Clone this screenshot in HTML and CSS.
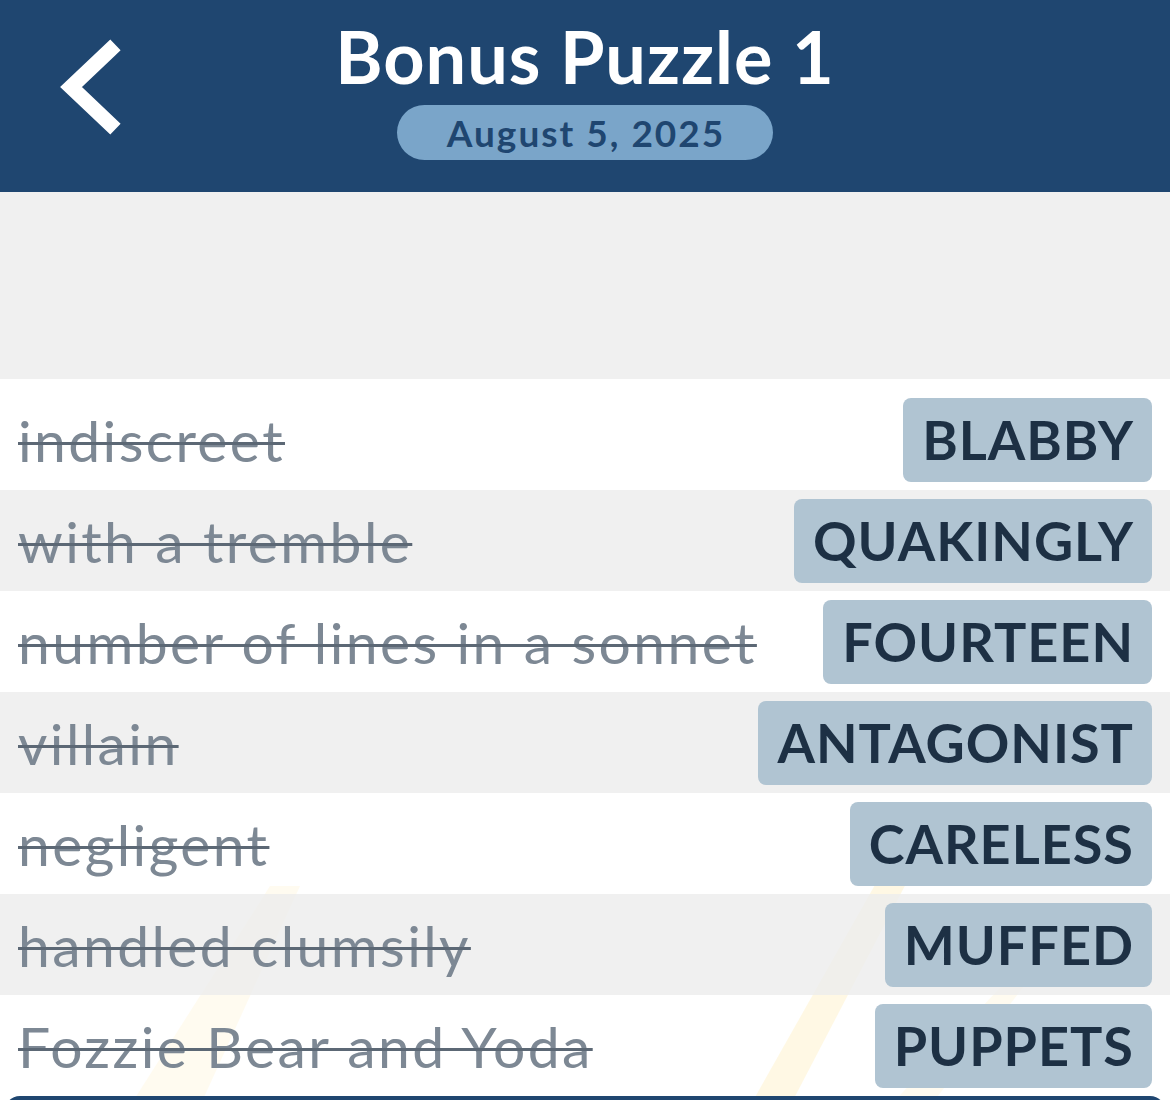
FILE: index.html
```html
<!DOCTYPE html>
<html lang="en">
<head>
    <meta charset="UTF-8">
    <meta name="viewport" content="width=device-width, initial-scale=1.0">
    <title>Bonus Puzzle 1</title>
    <link rel="stylesheet" href="styles.css">
</head>
<body>
<header class="topbar">
    <a class="back" href="#" aria-label="Back">
        <svg width="80" height="100" viewBox="0 0 80 100">
            <polyline points="60,13 21,50 60,87" fill="none" stroke="#fff" stroke-width="15" stroke-linecap="square" stroke-linejoin="miter"/>
        </svg>
    </a>
    <div class="heading">
        <h1>Bonus Puzzle 1</h1>
        <span class="date">August 5, 2025</span>
    </div>
</header>

<div class="spacer"></div>

<main class="board">
    <!-- faint sun rays behind the bottom rows -->
    <svg class="rays" width="1170" height="340" viewBox="0 0 1170 340">
        <polygon points="130,290 200,290 300,70 270,70" fill="#fff1c2" opacity="0.25"/>
        <polygon points="750,290 790,290 910,60 880,60" fill="#ffe9a6" opacity="0.3"/>
        <polygon points="890,290 930,290 1040,150 1020,150" fill="#fff1c2" opacity="0.25"/>
    </svg>
    <ul class="clues">
        <li class="clue"><span class="hint">indiscreet</span><span class="answer">BLABBY</span></li>
        <li class="clue"><span class="hint">with a tremble</span><span class="answer">QUAKINGLY</span></li>
        <li class="clue"><span class="hint">number of lines in a sonnet</span><span class="answer">FOURTEEN</span></li>
        <li class="clue"><span class="hint">villain</span><span class="answer">ANTAGONIST</span></li>
        <li class="clue"><span class="hint">negligent</span><span class="answer">CARELESS</span></li>
        <li class="clue"><span class="hint">handled clumsily</span><span class="answer">MUFFED</span></li>
        <li class="clue"><span class="hint">Fozzie Bear and Yoda</span><span class="answer">PUPPETS</span></li>
    </ul>
    <div class="bottombar"></div>
</main>
</body>
</html>
```

FILE: styles.css
```css
body {
    margin: 0;
    background-color: #f0f0f0;
    font-family: Lato, "Open Sans", sans-serif;
    overflow: hidden;
}
.topbar {
    background-color: #1f4670;
    height: 192px;
    display: grid;
    grid-template-columns: 1fr auto 1fr;
    align-items: start;
}
.back {
    display: block;
    margin: 37px 0 0 50px;
    width: 80px;
    height: 100px;
}
.heading {
    display: flex;
    flex-direction: column;
    align-items: center;
}
h1 {
    margin: 13px 0 0;
    color: #fff;
    font-size: 72px;
    font-weight: 700;
    line-height: 86px;
    letter-spacing: 1px;
}
.date {
    margin-top: 6px;
    background-color: #7aa5c9;
    color: #1f4670;
    font-size: 37px;
    font-weight: 700;
    line-height: 55px;
    letter-spacing: 2px;
    padding: 0 48px 0 50px;
    border-radius: 28px;
}
.spacer {
    height: 187px;
}
.board {
    position: relative;
    background-color: #fff;
    padding-top: 10px;
}
.rays {
    position: absolute;
    left: 0;
    bottom: 0;
    pointer-events: none;
}
.clues {
    position: relative;
    list-style: none;
    margin: 0;
    padding: 0;
}
.clue {
    height: 101px;
    display: flex;
    align-items: center;
    justify-content: space-between;
    padding: 0 18px;
}
.clue:nth-child(even) {
    background-color: rgba(236, 236, 236, 0.8);
}
.hint {
    color: #7d8894;
    font-size: 57px;
    letter-spacing: 2.4px;
    text-decoration: line-through;
    text-decoration-color: #5c6875;
    text-decoration-thickness: 3px;
}
.answer {
    background-color: #b0c4d2;
    color: #1d3044;
    font-size: 54px;
    font-weight: 700;
    line-height: 84px;
    letter-spacing: 1px;
    padding: 0 18px 0 19px;
    border-radius: 8px;
}
.bottombar {
    position: relative;
    height: 60px;
    margin: 0 4px;
    background-color: #1f4670;
    border-radius: 16px 16px 0 0;
}
```
